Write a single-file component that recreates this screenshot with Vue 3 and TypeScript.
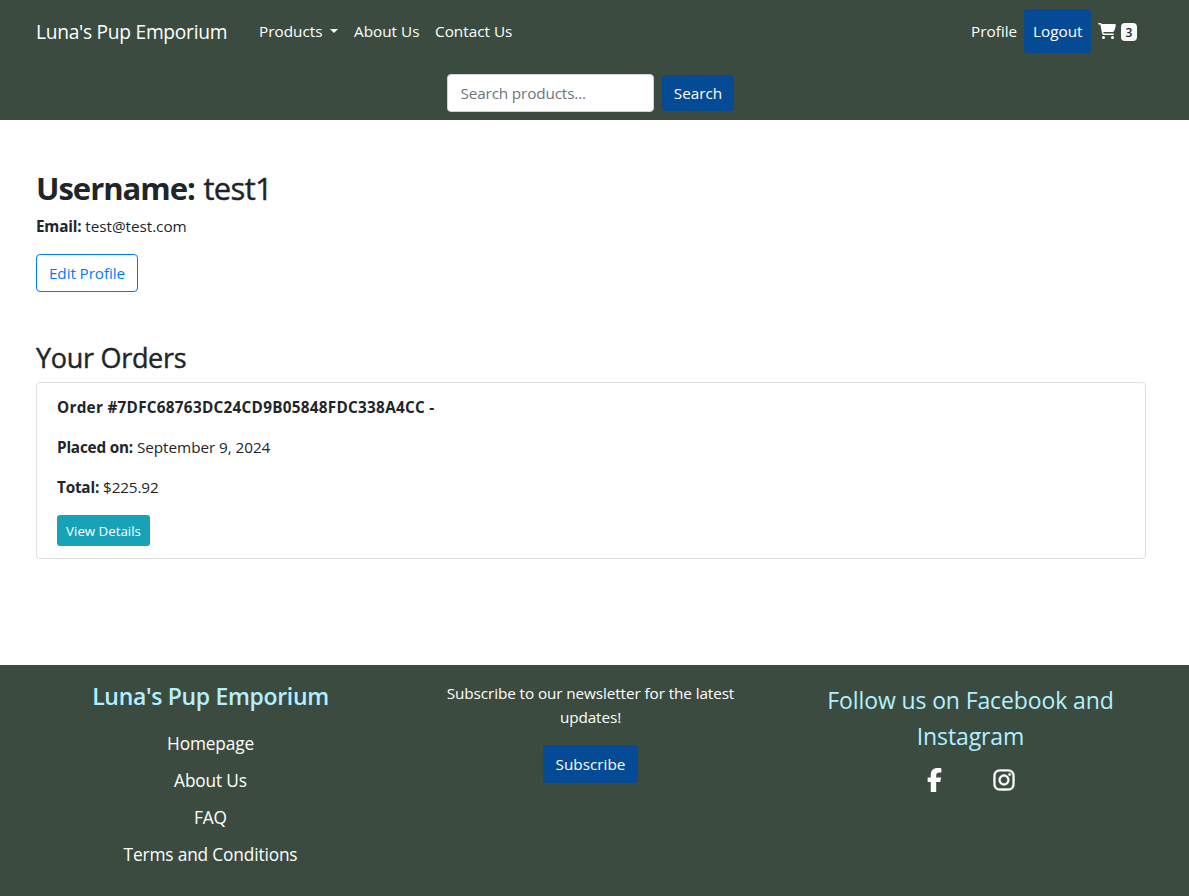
<script setup lang="ts">
interface Order {
  id: string
  placed: string
  total: string
}

const orders: Order[] = [
  { id: '7DFC68763DC24CD9B05848FDC338A4CC', placed: 'September 9, 2024', total: '$225.92' },
]
const footerLinks: string[] = ['Homepage', 'About Us', 'FAQ', 'Terms and Conditions']
const cartCount = 3
</script>

<template>
  <div class="page">
    <header class="header">
      <nav class="navbar">
        <a class="brand"><span>Luna's Pup Emporium</span></a>
        <a class="link products"><span>Products</span><i class="caret"></i></a>
        <a class="link about"><span>About Us</span></a>
        <a class="link contact"><span>Contact Us</span></a>
        <a class="link profile"><span>Profile</span></a>
        <a class="link logout"><span>Logout</span></a>
        <a class="cart">
          <svg class="cart-icon" viewBox="0 0 576 512" fill="currentColor">
            <path d="M0 24C0 10.7 10.7 0 24 0H69.5c22 0 41.5 12.8 50.6 32h411c26.3 0 45.5 25 38.6 50.4l-41 152.3c-8.5 31.4-37 53.3-69.5 53.3H170.7l5.4 28.5c2.2 11.3 12.1 19.5 23.6 19.5H488c13.3 0 24 10.7 24 24s-10.7 24-24 24H199.7c-34.6 0-64.3-24.6-70.7-58.5L77.4 54.5c-.7-3.8-4-6.5-7.9-6.5H24C10.7 48 0 37.3 0 24zM128 464a48 48 0 1 1 96 0 48 48 0 1 1 -96 0zm336-48a48 48 0 1 1 0 96 48 48 0 1 1 0-96z" />
            <path d="M122 40H540L495 262H160z" />
          </svg>
          <span class="badge">{{ cartCount }}</span>
        </a>
      </nav>
      <form class="search" @submit.prevent>
        <input class="search-input" type="text" placeholder="Search products..." />
        <button class="btn search-btn" type="submit">Search</button>
      </form>
    </header>

    <main class="main">
      <h1 class="username"><strong>Username:</strong> <span>test1</span></h1>
      <p class="email"><strong>Email:</strong> <span>test@test.com</span></p>
      <a class="edit">Edit Profile</a>

      <h2 class="orders-title">Your Orders</h2>
      <ul class="orders">
        <li v-for="order in orders" :key="order.id" class="order">
          <p><strong class="order-id">Order #{{ order.id }} -</strong></p>
          <p><strong>Placed on:</strong> <span>{{ order.placed }}</span></p>
          <p><strong>Total:</strong> <span class="total">{{ order.total }}</span></p>
          <a class="details">View Details</a>
        </li>
      </ul>
    </main>

    <footer class="footer">
      <div class="col">
        <h4 class="footer-brand">Luna's Pup Emporium</h4>
        <ul class="footer-links">
          <li v-for="label in footerLinks" :key="label">{{ label }}</li>
        </ul>
      </div>
      <div class="col">
        <p class="newsletter">Subscribe to our newsletter for the latest<br />updates!</p>
        <button class="btn subscribe">Subscribe</button>
      </div>
      <div class="col">
        <p class="follow">Follow us on Facebook and<br />Instagram</p>
        <div class="social">
          <svg class="facebook" viewBox="0 0 320 512" fill="currentColor">
            <path d="M80 299.3V512H196V299.3h86.5l18-97.8H196V166.9c0-51.7 20.3-71.5 72.7-71.5c16.3 0 29.4 .4 37 1.2V7.9C291.4 4 256.4 0 236.2 0C129.3 0 80 50.5 80 159.4v42.1H14v97.8H80z" />
          </svg>
          <svg class="instagram" viewBox="0 0 448 512" fill="currentColor">
            <path d="M224.1 141c-63.6 0-114.9 51.3-114.9 114.9s51.3 114.9 114.9 114.9S339 319.5 339 255.9 287.7 141 224.1 141zm0 189.6c-41.1 0-74.7-33.5-74.7-74.7s33.5-74.7 74.7-74.7 74.7 33.5 74.7 74.7-33.6 74.7-74.7 74.7zm146.4-194.3c0 14.9-12 26.8-26.8 26.8-14.9 0-26.8-12-26.8-26.8s12-26.8 26.8-26.8 26.8 12 26.8 26.8zm76.1 27.2c-1.7-35.9-9.9-67.7-36.2-93.9-26.2-26.2-58-34.4-93.9-36.2-37-2.1-147.9-2.1-184.9 0-35.8 1.7-67.6 9.9-93.9 36.1s-34.4 58-36.2 93.9c-2.1 37-2.1 147.9 0 184.9 1.7 35.9 9.9 67.7 36.2 93.9s58 34.4 93.9 36.2c37 2.1 147.9 2.1 184.9 0 35.9-1.7 67.7-9.9 93.9-36.2 26.2-26.2 34.4-58 36.2-93.9 2.1-37 2.1-147.8 0-184.8zM398.8 388c-7.8 19.6-22.9 34.7-42.6 42.6-29.5 11.7-99.5 9-132.1 9s-102.7 2.6-132.1-9c-19.6-7.8-34.7-22.9-42.6-42.6-11.7-29.5-9-99.5-9-132.1s-2.6-102.7 9-132.1c7.8-19.6 22.9-34.7 42.6-42.6 29.5-11.7 99.5-9 132.1-9s102.7-2.6 132.1 9c19.6 7.8 34.7 22.9 42.6 42.6 11.7 29.5 9 99.5 9 132.1s2.7 102.7-9 132.1z" />
          </svg>
        </div>
      </div>
    </footer>
  </div>
</template>

<style>
body {
  margin: 0;
  background: #fff;
}
</style>

<style scoped>
.page {
  display: flex;
  flex-direction: column;
  height: 896px;
  overflow: hidden;
  font-family: 'Open Sans', 'Noto Sans', sans-serif;
  font-size: 15.3px;
  line-height: 24px;
  color: #212529;
  white-space: nowrap;
}
.page *,
.page {
  box-sizing: border-box;
}
h1, h2, h4, p, ul {
  margin: 0;
  padding: 0;
}
ul {
  list-style: none;
}
strong {
  font-weight: 700;
}
.header {
  height: 120px;
  background: #3b4b3f;
  color: #fff;
}
.navbar {
  display: flex;
  align-items: center;
  height: 62px;
  padding: 0 44px 0 36px;
}
.brand {
  width: 215px;
  padding-top: 1px;
  font-size: 19.2px;
  letter-spacing: -0.28px;
  line-height: 30px;
}
.link {
  display: flex;
  align-items: center;
  height: 44px;
  padding: 0 8px;
}
.products {
  width: 95px;
}
.caret {
  margin-left: auto;
  border-top: 4.8px solid #fff;
  border-left: 4.8px solid transparent;
  border-right: 4.8px solid transparent;
}
.about {
  width: 81px;
}
.contact {
  width: 93px;
}
.profile {
  margin-left: auto;
  width: 61px;
}
.logout {
  width: 67px;
  padding-left: 9px;
  border-radius: 4px;
  background: #054a94;
}
.cart {
  display: flex;
  align-items: center;
  width: 54px;
  padding: 2px 0 0 7px;
}
.cart-icon {
  width: 18px;
  height: 16px;
  margin-top: -2px;
}
.badge {
  width: 16px;
  height: 18px;
  margin-left: 5px;
  border-radius: 4px;
  background: #f8f9fa;
  color: #212529;
  font-size: 12px;
  font-weight: 600;
  line-height: 19px;
  text-align: center;
}
.search {
  display: flex;
  align-items: center;
  gap: 8px;
  padding: 12px 0 0 447px;
}
.search-input {
  width: 207px;
  height: 38px;
  padding: 0 12.5px;
  border: 1px solid #ced4da;
  border-radius: 4px;
  background: #fff;
  font: inherit;
  letter-spacing: -0.15px;
}
.search-input::placeholder {
  color: #6c757d;
  opacity: 1;
}
.btn {
  padding: 0;
  border: 0;
  border-radius: 4px;
  background: #054a94;
  color: #fff;
  font: inherit;
}
.search-btn {
  width: 72px;
  height: 36px;
}
.main {
  height: 545px;
  padding: 49px 43px 0 36px;
}
.username {
  font-size: 31px;
  font-weight: 400;
  letter-spacing: -1px;
  line-height: 38px;
}
.username span {
  margin-left: 1.5px;
  letter-spacing: -0.7px;
  -webkit-text-stroke: 0.4px currentColor;
}
.email {
  margin-top: 7px;
}
.email strong,
.order strong {
  letter-spacing: -0.2px;
}
.email span {
  letter-spacing: -0.05px;
}
.order span {
  letter-spacing: -0.06px;
}
.order .total {
  letter-spacing: -0.15px;
}
.edit {
  display: block;
  width: 102px;
  height: 38px;
  margin-top: 16px;
  border: 1px solid #007bff;
  border-radius: 4px;
  color: #007bff;
  letter-spacing: -0.1px;
  line-height: 36px;
  text-align: center;
}
.orders-title {
  margin-top: 49px;
  font-size: 27px;
  font-weight: 400;
  letter-spacing: -0.3px;
  line-height: 34px;
  -webkit-text-stroke: 0.4px currentColor;
}
.orders {
  margin-top: 7px;
}
.order {
  height: 177px;
  padding: 12px 20px;
  border: 1px solid #dfdfdf;
  border-radius: 4px;
}
.order p {
  margin-bottom: 16px;
}
.order .order-id {
  letter-spacing: 0.27px;
}
.details {
  display: block;
  width: 93px;
  height: 31px;
  border-radius: 3px;
  background: #17a2b8;
  color: #fff;
  font-size: 13.3px;
  line-height: 32px;
  text-align: center;
}
.footer {
  display: grid;
  grid-template-columns: repeat(3, 380px);
  height: 231px;
  padding: 16px 0 0 20.5px;
  background: #3b4b3f;
  color: #fff;
  text-align: center;
}
.footer-brand {
  color: #b3f0ff;
  font-size: 23px;
  font-weight: 600;
  letter-spacing: -0.33px;
  line-height: 30px;
}
.footer-links {
  margin-top: 19px;
  font-size: 17.3px;
  letter-spacing: -0.15px;
  line-height: 27px;
}
.footer-links li {
  margin-bottom: 10px;
}
.newsletter {
  letter-spacing: -0.1px;
}
.subscribe {
  width: 95px;
  height: 38px;
  margin-top: 16px;
}
.follow {
  padding-top: 1px;
  color: #b3f0ff;
  font-size: 23px;
  letter-spacing: -0.12px;
  line-height: 36px;
}
.social {
  display: flex;
  justify-content: center;
  gap: 51px;
  margin-top: 14px;
}
.facebook {
  width: 15px;
  height: 24px;
}
.instagram {
  width: 22px;
  height: 24px;
  stroke: currentColor;
  stroke-width: 8px;
}
</style>
